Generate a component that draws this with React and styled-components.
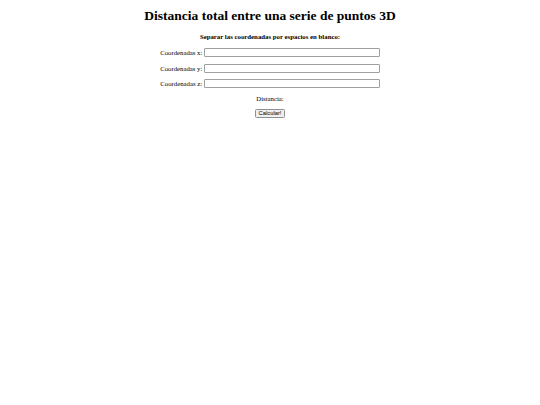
import React from "react";
import styled, { createGlobalStyle } from "styled-components";

const GlobalStyle = createGlobalStyle`
  html, body {
    margin: 0;
    padding: 0;
    background: #ffffff;
  }
  body {
    font-family: "Liberation Serif", "Times New Roman", serif;
    color: #000000;
  }
`;

const Page = styled.div`
  display: flex;
  flex-direction: column;
  align-items: center;
  padding-top: 8px;
`;

const Title = styled.h1`
  margin: 0;
  font-size: 13.5px;
  line-height: 16px;
  font-weight: 700;
`;

const Hint = styled.p`
  margin: 9px 0 0;
  font-size: 6.8px;
  line-height: 8px;
  font-weight: 700;
`;

const Form = styled.form`
  display: flex;
  flex-direction: column;
  align-items: center;
  gap: 6.5px;
  margin-top: 7px;
`;

const Row = styled.label`
  display: flex;
  align-items: center;
  gap: 1.5px;
  font-size: 6.75px;
  line-height: 9px;
`;

const Field = styled.input`
  box-sizing: border-box;
  width: 176px;
  height: 9px;
  padding: 0 1px;
  border: 1px solid #a0a0a0;
  border-radius: 1px;
  background: #ffffff;
  font-size: 6.5px;
  outline: none;
`;

const Result = styled.div`
  margin-top: 5.5px;
  font-size: 6.75px;
  line-height: 9px;
`;

const Button = styled.button`
  margin-top: 6.5px;
  box-sizing: border-box;
  height: 8.5px;
  padding: 0 2.5px;
  border: 1px solid #8f8f8f;
  border-radius: 1.5px;
  background: #efefef;
  font-family: "Liberation Sans", Arial, sans-serif;
  font-size: 5.8px;
  line-height: 6px;
  color: #000000;
`;

export default function App() {
  return (
    <>
      <GlobalStyle />
      <Page>
        <Title>Distancia total entre una serie de puntos 3D</Title>
        <Hint>Separar las coordenadas por espacios en blanco:</Hint>
        <Form onSubmit={(e) => e.preventDefault()}>
          <Row>
            Coordenadas x: <Field type="text" />
          </Row>
          <Row>
            Coordenadas y: <Field type="text" />
          </Row>
          <Row>
            Coordenadas z: <Field type="text" />
          </Row>
        </Form>
        <Result>Distancia:</Result>
        <Button type="button">Calcular!</Button>
      </Page>
    </>
  );
}
